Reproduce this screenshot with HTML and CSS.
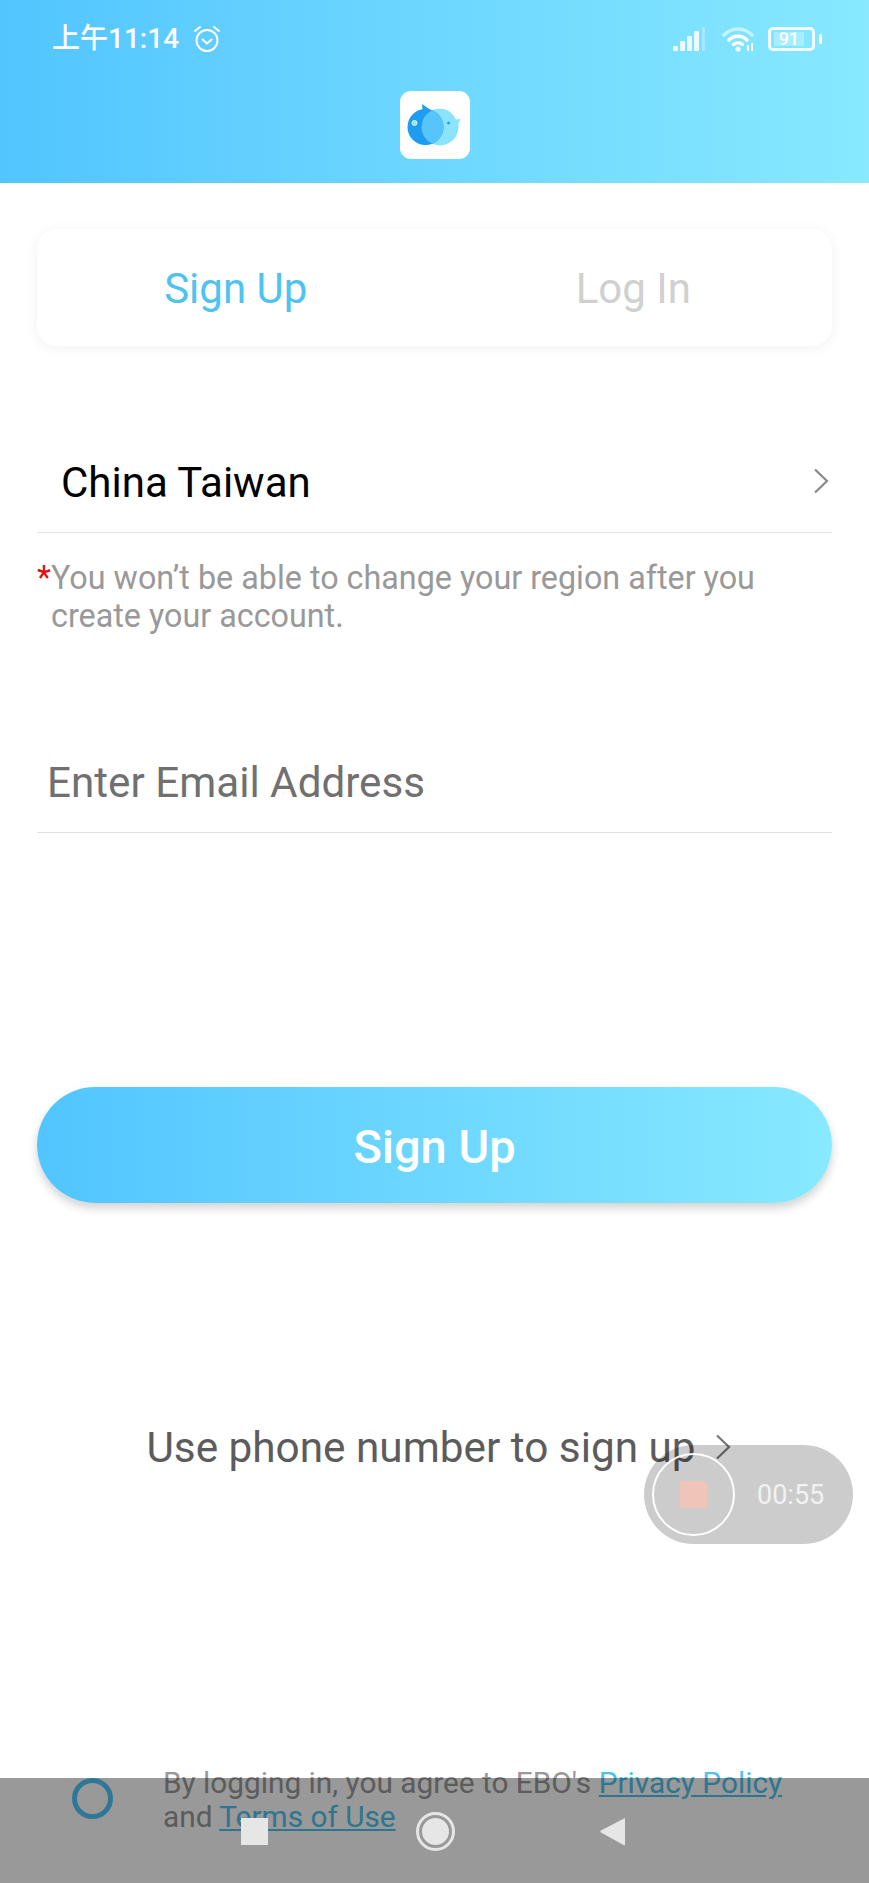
FILE: index.html
```html
<!DOCTYPE html>
<html lang="en">
<head>
  <meta charset="UTF-8">
  <meta name="viewport" content="width=device-width, initial-scale=1.0">
  <title>Sign Up</title>
  <link rel="stylesheet" href="styles.css">
</head>
<body>
  <div class="page">
    <header class="header">
      <div class="status">
        <div class="status-left">
          <span class="time">上午11:14</span>
          <svg class="alarm" viewBox="0 0 30 30" fill="none" stroke="#fff" stroke-width="2" stroke-linecap="round" stroke-linejoin="round">
            <circle cx="15" cy="16.5" r="10.5"/>
            <path d="M10.5 15.5l4.5 4 4.5-4"/>
            <path d="M3 7l5-4M27 7l-5-4"/>
          </svg>
        </div>
        <div class="status-right">
          <svg class="signal" viewBox="0 0 33 24" fill="#fff">
            <rect x="0" y="19" width="5" height="5" rx="1" opacity=".85"/>
            <rect x="7" y="14" width="5" height="10" rx="1" opacity=".85"/>
            <rect x="14" y="9" width="5" height="15" rx="1" opacity=".85"/>
            <rect x="21" y="4" width="5" height="20" rx="1" opacity=".85"/>
            <rect x="29" y="0" width="3" height="24" rx="1" opacity=".3"/>
          </svg>
          <svg class="wifi" viewBox="0 0 32 26" fill="none" stroke="#fff" stroke-linecap="round">
            <path d="M2 9C10 1 22 1 30 9" stroke-width="3.500" opacity=".55"/>
            <path d="M7 14C12 9 20 9 25 14" stroke-width="3.500"/>
            <path d="M11.500 18.500C14 16.500 18 16.500 20.500 18.500" stroke-width="3.500"/>
            <circle cx="16" cy="23" r="2.500" fill="#fff" stroke="none"/>
            <path d="M26 19v6M30 17v8" stroke-width="2" stroke-linecap="butt"/>
          </svg>
          <div class="battery">
            <div class="battery-body"><span class="battery-level">91</span></div>
            <div class="battery-nub"></div>
          </div>
        </div>
      </div>
      <div class="logo">
        <svg viewBox="0 0 70 68" width="70" height="68">
          <defs>
            <clipPath id="leftBird"><circle cx="25.500" cy="36" r="18"/></clipPath>
          </defs>
          <path d="M40 17.500a18.500 18.500 0 1 0 18.500 18.500c0-2 0-3 .5-5l2-3-5 .5c-3-6.500-9-11-16.500-11z" fill="#8be4fd"/>
          <path d="M22 13l10 7-9 3z" fill="#1d9cf0"/>
          <circle cx="25.500" cy="36" r="18" fill="#1d9cf0"/>
          <circle cx="40" cy="36" r="18.500" fill="#57c5fb" clip-path="url(#leftBird)"/>
          <circle cx="14.500" cy="32" r="2.500" fill="#8be4fd" stroke="#d8f4ff" stroke-width="1"/>
          <circle cx="48.500" cy="32" r="1.500" fill="#2a9fe0"/>
        </svg>
      </div>
    </header>

    <main class="content">
      <div class="tabs">
        <div class="tab tab-active">Sign Up</div>
        <div class="tab">Log In</div>
      </div>

      <div class="field region">
        <span class="region-name">China Taiwan</span>
        <svg class="chevron" viewBox="0 0 16 26" fill="none" stroke="#888" stroke-width="2.200"><path d="M2 1.500L14 13 2 24.500"/></svg>
      </div>

      <div class="note">
        <span class="note-star">*</span>
        <span>You won’t be able to change your region after you create your account.</span>
      </div>

      <div class="field email">Enter Email Address</div>

      <button class="submit">Sign Up</button>

      <div class="phone-link">
        <span>Use phone number to sign up</span>
        <svg class="chevron" viewBox="0 0 16 26" fill="none" stroke="#777" stroke-width="2.200"><path d="M2 1.500L14 13 2 24.500"/></svg>
      </div>

      <div class="legal">
        <div class="radio"></div>
        <p class="legal-text">By logging in, you agree to EBO's <a href="#">Privacy Policy</a> and <a href="#">Terms of Use</a></p>
      </div>
    </main>

    <div class="recorder">
      <div class="recorder-ring"><div class="recorder-stop"></div></div>
      <span class="recorder-time">00:55</span>
    </div>

    <nav class="navbar">
      <div class="nav-square"></div>
      <div class="nav-circle"><div class="nav-dot"></div></div>
      <svg class="nav-back" viewBox="0 0 25 29"><path d="M24 1.500C25 1 25 1.500 25 2.500V26.500C25 28 24.500 29 23.500 28L1 15.500C0 14.800 0 14.200 1 13.500z" fill="#e6e6e6"/></svg>
    </nav>
  </div>
</body>
</html>
```

FILE: styles.css
```css
* {
  box-sizing: border-box;
}
body {
  margin: 0;
  background: #fff;
  font-family: Roboto, "Noto Sans CJK SC", sans-serif;
}
.page {
  position: relative;
  width: 869px;
  height: 1883px;
  overflow: hidden;
  background: #fff;
}

/* header */
.header {
  height: 183px;
  padding-top: 22px;
  background: linear-gradient(90deg, #52c5ff, #88e9ff);
}
.status {
  display: flex;
  justify-content: space-between;
  align-items: center;
  height: 34px;
  padding: 0 47px 0 52px;
}
.status-left,
.status-right {
  display: flex;
  align-items: center;
}
.time {
  color: #fff;
  font-size: 28px;
  font-weight: 500;
  line-height: 34px;
}
.alarm {
  width: 30px;
  height: 30px;
  margin-left: 13px;
}
.signal {
  width: 33px;
  height: 24px;
}
.wifi {
  width: 32px;
  height: 26px;
  margin-left: 16px;
}
.battery {
  display: flex;
  align-items: center;
  margin-left: 14px;
}
.battery-body {
  width: 47px;
  height: 24px;
  padding: 2px 3px;
  border: 3px solid rgba(255,255,255,0.9);
  border-radius: 5px;
}
.battery-level {
  display: block;
  width: 85%;
  height: 100%;
  background: rgba(255,255,255,0.3);
  color: #fff;
  font-size: 18px;
  font-weight: 500;
  line-height: 14px;
  text-align: center;
}
.battery-nub {
  width: 3px;
  height: 10px;
  margin-left: 4px;
  background: #fff;
  border-radius: 2px;
}
.logo {
  width: 70px;
  height: 68px;
  margin: 35px auto 0;
  background: #fff;
  border-radius: 11px;
}
.logo svg {
  display: block;
}

/* form */
.content {
  display: flex;
  flex-direction: column;
  padding: 46px 37px 0;
}
.tabs {
  display: flex;
  height: 117px;
  background: #fff;
  border-radius: 20px;
  box-shadow: 0 2px 14px rgba(0,0,0,0.06);
}
.tab {
  flex: 1;
  display: flex;
  align-items: center;
  justify-content: center;
  padding-top: 2px;
  color: #d0d0d0;
  font-size: 42px;
}
.tab-active {
  color: #4fc3f0;
}
.field {
  height: 100px;
  display: flex;
  align-items: center;
  border-bottom: 1px solid #e2e2e2;
}
.region {
  justify-content: space-between;
  margin-top: 87px;
  padding: 0 3px 0 24px;
}
.region-name {
  color: #000;
  font-size: 42px;
}
.region .chevron {
  margin-top: -3px;
}
.chevron {
  width: 16px;
  height: 26px;
}
.note {
  display: flex;
  margin-top: 26px;
  color: #999;
  font-size: 32.300px;
  line-height: 38px;
}
.note-star {
  flex: none;
  width: 14px;
  color: #e01010;
}
.email {
  margin-top: 98px;
  padding-left: 10px;
  color: #707070;
  font-size: 42.200px;
}
.submit {
  height: 116px;
  margin-top: 254px;
  padding-top: 4px;
  border: none;
  border-radius: 58px;
  background: linear-gradient(90deg, #52c5ff, #88e9ff);
  box-shadow: 0 5px 10px rgba(0,0,0,0.18);
  color: #fff;
  font-family: inherit;
  font-size: 47px;
  font-weight: 500;
}
.phone-link {
  display: flex;
  align-items: center;
  justify-content: center;
  height: 60px;
  margin-top: 214px;
  padding-left: 8px;
  color: #5c5c5c;
  font-size: 42.300px;
}
.phone-link .chevron {
  margin-left: 19px;
}
.legal {
  display: flex;
  margin-top: 289px;
  padding-left: 35px;
}
.radio {
  flex: none;
  width: 41px;
  height: 41px;
  margin-top: 12px;
  border: 5px solid #4ec8f8;
  border-radius: 50%;
}
.legal-text {
  width: 640px;
  margin: 0 0 0 50px;
  color: #999;
  font-size: 29.800px;
  line-height: 34px;
}
.legal-text a {
  color: #4ec3f0;
}

/* screen recorder bubble, floats over the page */
.recorder {
  position: absolute;
  left: 644px;
  top: 1445px;
  display: flex;
  align-items: center;
  width: 209px;
  height: 99px;
  padding-left: 8px;
  border-radius: 50px;
  background: rgba(0,0,0,0.2);
}
.recorder-ring {
  display: flex;
  align-items: center;
  justify-content: center;
  width: 83px;
  height: 83px;
  border: 2px solid #fff;
  border-radius: 50%;
}
.recorder-stop {
  width: 27px;
  height: 27px;
  border-radius: 3px;
  background: #f0c4b8;
}
.recorder-time {
  margin-left: 22px;
  color: #f2f2f2;
  font-size: 27px;
}

/* system navigation bar, dims whatever is below it */
.navbar {
  position: absolute;
  left: 0;
  right: 0;
  bottom: 0;
  display: flex;
  justify-content: space-between;
  align-items: flex-start;
  height: 105px;
  padding: 34px 244px 0 241px;
  background: rgba(0,0,0,0.4);
}
.nav-square {
  width: 27px;
  height: 27px;
  margin-top: 6px;
  background: #e6e6e6;
}
.nav-circle {
  display: flex;
  align-items: center;
  justify-content: center;
  width: 39px;
  height: 39px;
  margin-left: 2px;
  border: 3px solid #e6e6e6;
  border-radius: 50%;
}
.nav-dot {
  width: 27px;
  height: 27px;
  border-radius: 50%;
  background: #e6e6e6;
}
.nav-back {
  width: 25px;
  height: 29px;
  margin-top: 5px;
}
```
